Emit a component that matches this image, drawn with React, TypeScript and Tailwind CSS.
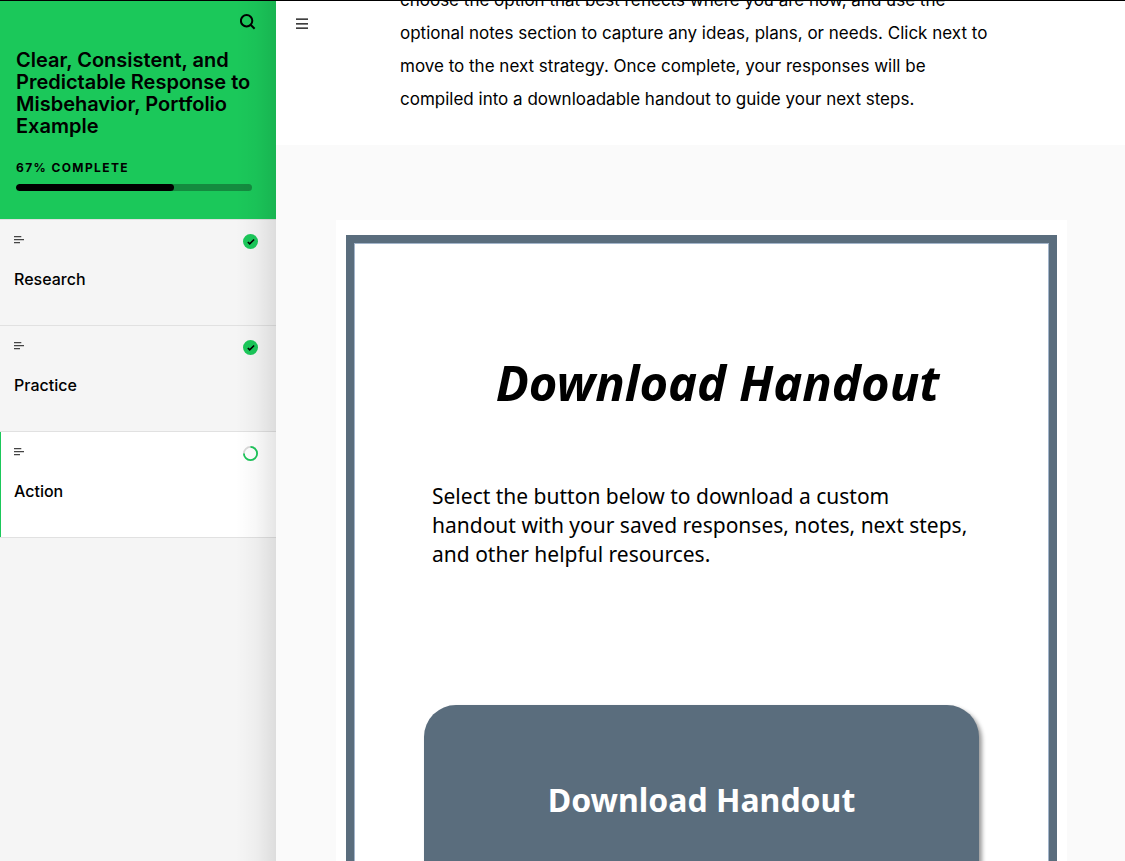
import React from 'react';

type Lesson = {
  title: string;
  status: 'done' | 'active';
};

const lessons: Lesson[] = [
  { title: 'Research', status: 'done' },
  { title: 'Practice', status: 'done' },
  { title: 'Action', status: 'active' },
];

const progress = 67;

function SearchIcon() {
  return (
    <svg width="16" height="16" viewBox="0 0 16 16" fill="none" stroke="currentColor" strokeWidth="2" aria-hidden="true">
      <circle cx="6.6" cy="6.8" r="5.7" />
      <path d="M10.6 10.8l4 4" />
    </svg>
  );
}

function MenuIcon() {
  return (
    <svg width="12" height="11" viewBox="0 0 12 11" fill="none" stroke="currentColor" strokeWidth="1.3" aria-hidden="true">
      <path d="M0 1.2h12M0 5.8h12M0 10.2h12" />
    </svg>
  );
}

function LinesIcon() {
  return (
    <svg width="10" height="8" viewBox="0 0 10 8" fill="none" stroke="#444" strokeWidth="1.3" aria-hidden="true">
      <path d="M0 .7h7.3M0 3.7h10M0 6.7h6" />
    </svg>
  );
}

function StatusIcon({ status }: { status: Lesson['status'] }) {
  if (status === 'done') {
    return (
      <svg width="15" height="15" viewBox="0 0 15 15" fill="none" aria-hidden="true">
        <circle cx="7.5" cy="7.5" r="7.5" fill="#1bc85a" />
        <path d="M4.8 8l1.9 1.8 4.4-4.3" stroke="#000" strokeWidth="1.6" />
      </svg>
    );
  }
  return (
    <svg width="15" height="15" viewBox="0 0 15 15" fill="none" strokeWidth="1.8" aria-hidden="true">
      <circle cx="7.5" cy="7.5" r="6.6" stroke="#d9d9d9" />
      <path d="M7.5 .9a6.6 6.6 0 1 1-6.6 6.6" stroke="#1bc85a" />
    </svg>
  );
}

function LessonItem({ lesson }: { lesson: Lesson }) {
  const active = lesson.status === 'active';
  return (
    <li className={active ? 'border-b border-[#e1e1e1] bg-white' : 'border-b border-[#e1e1e1]'}>
      <a
        href="#"
        aria-current={active ? 'page' : undefined}
        className={
          active
            ? 'block border-l border-[#1bc85a] pt-[14px] pr-[18px] pb-[34px] pl-[13px]'
            : 'block pt-[14px] pr-[18px] pb-[34px] pl-[14px]'
        }
      >
        <div className="flex items-start justify-between">
          <div className="pt-0.5">
            <LinesIcon />
          </div>
          <StatusIcon status={lesson.status} />
        </div>
        <div className="mt-[18px] text-base leading-6 font-medium">{lesson.title}</div>
      </a>
    </li>
  );
}

function Sidebar() {
  return (
    <aside className="relative w-[276px] shrink-0 bg-[#f5f5f5]">
      <div className="bg-[#1bc85a] px-4 pt-[13px] pb-7">
        <div className="flex justify-end pr-1">
          <button type="button" aria-label="Search" className="block">
            <SearchIcon />
          </button>
        </div>
        <h1 className="mt-[19px] text-[20px] leading-[22px] font-semibold">
          Clear, Consistent, and Predictable Response to Misbehavior, Portfolio Example
        </h1>
        <p className="mt-[23px] text-xs leading-4 font-bold tracking-[1.4px] uppercase">{progress}% complete</p>
        <div className="mt-2 mr-2 h-[7px] overflow-hidden rounded-full bg-[#148b3f]">
          <div className="h-full rounded-full bg-black" style={{ width: `${progress}%` }} />
        </div>
      </div>
      <ul className="border-t border-[#e1e1e1]">
        {lessons.map((lesson) => (
          <LessonItem key={lesson.title} lesson={lesson} />
        ))}
      </ul>
      <div className="pointer-events-none absolute inset-y-0 right-0 w-10 bg-gradient-to-r from-transparent via-black/3 to-black/10" />
    </aside>
  );
}

export default function App() {
  return (
    <div className="flex h-screen overflow-hidden border-t border-black bg-white font-['Inter',sans-serif] text-black">
      <Sidebar />
      <main className="relative min-w-0 flex-1 overflow-hidden bg-[#fafafa]">
        <button type="button" aria-label="Toggle navigation" className="absolute top-[17px] left-5">
          <MenuIcon />
        </button>
        <section className="-mt-[17px] bg-white pb-[29px]">
          <p className="mx-auto max-w-[601px] text-[17px] leading-[33px]">
            choose the option that best reflects where you are now, and use the optional notes section to capture any
            ideas, plans, or needs. Click next to move to the next strategy. Once complete, your responses will be
            compiled into a downloadable handout to guide your next steps.
          </p>
        </section>
        <section className="pt-[75px] pr-4 pl-[18px] font-['Noto_Sans',sans-serif]">
          <div className="mx-auto max-w-[731px] bg-white px-[10px] py-[15px]">
            <div className="border-8 border-[#5a6d7d] px-[70px] pb-20 shadow-[inset_0_0_0_1px_#a3b5cb]">
              <h2 className="pt-[104px] pl-8 text-center text-[49px] leading-[70px] font-bold italic">
                Download Handout
              </h2>
              <p className="mt-[65px] px-2 text-[21px] leading-[29px]">
                Select the button below to download a custom handout with your saved responses, notes, next steps, and
                other helpful resources.
              </p>
              <button
                type="button"
                className="mt-[136px] block h-[190px] w-full rounded-[32px] bg-[#5a6d7d] text-[32px] font-bold text-white shadow-[3px_3px_4px_rgba(0,0,0,0.4)]"
              >
                Download Handout
              </button>
            </div>
          </div>
        </section>
      </main>
    </div>
  );
}
